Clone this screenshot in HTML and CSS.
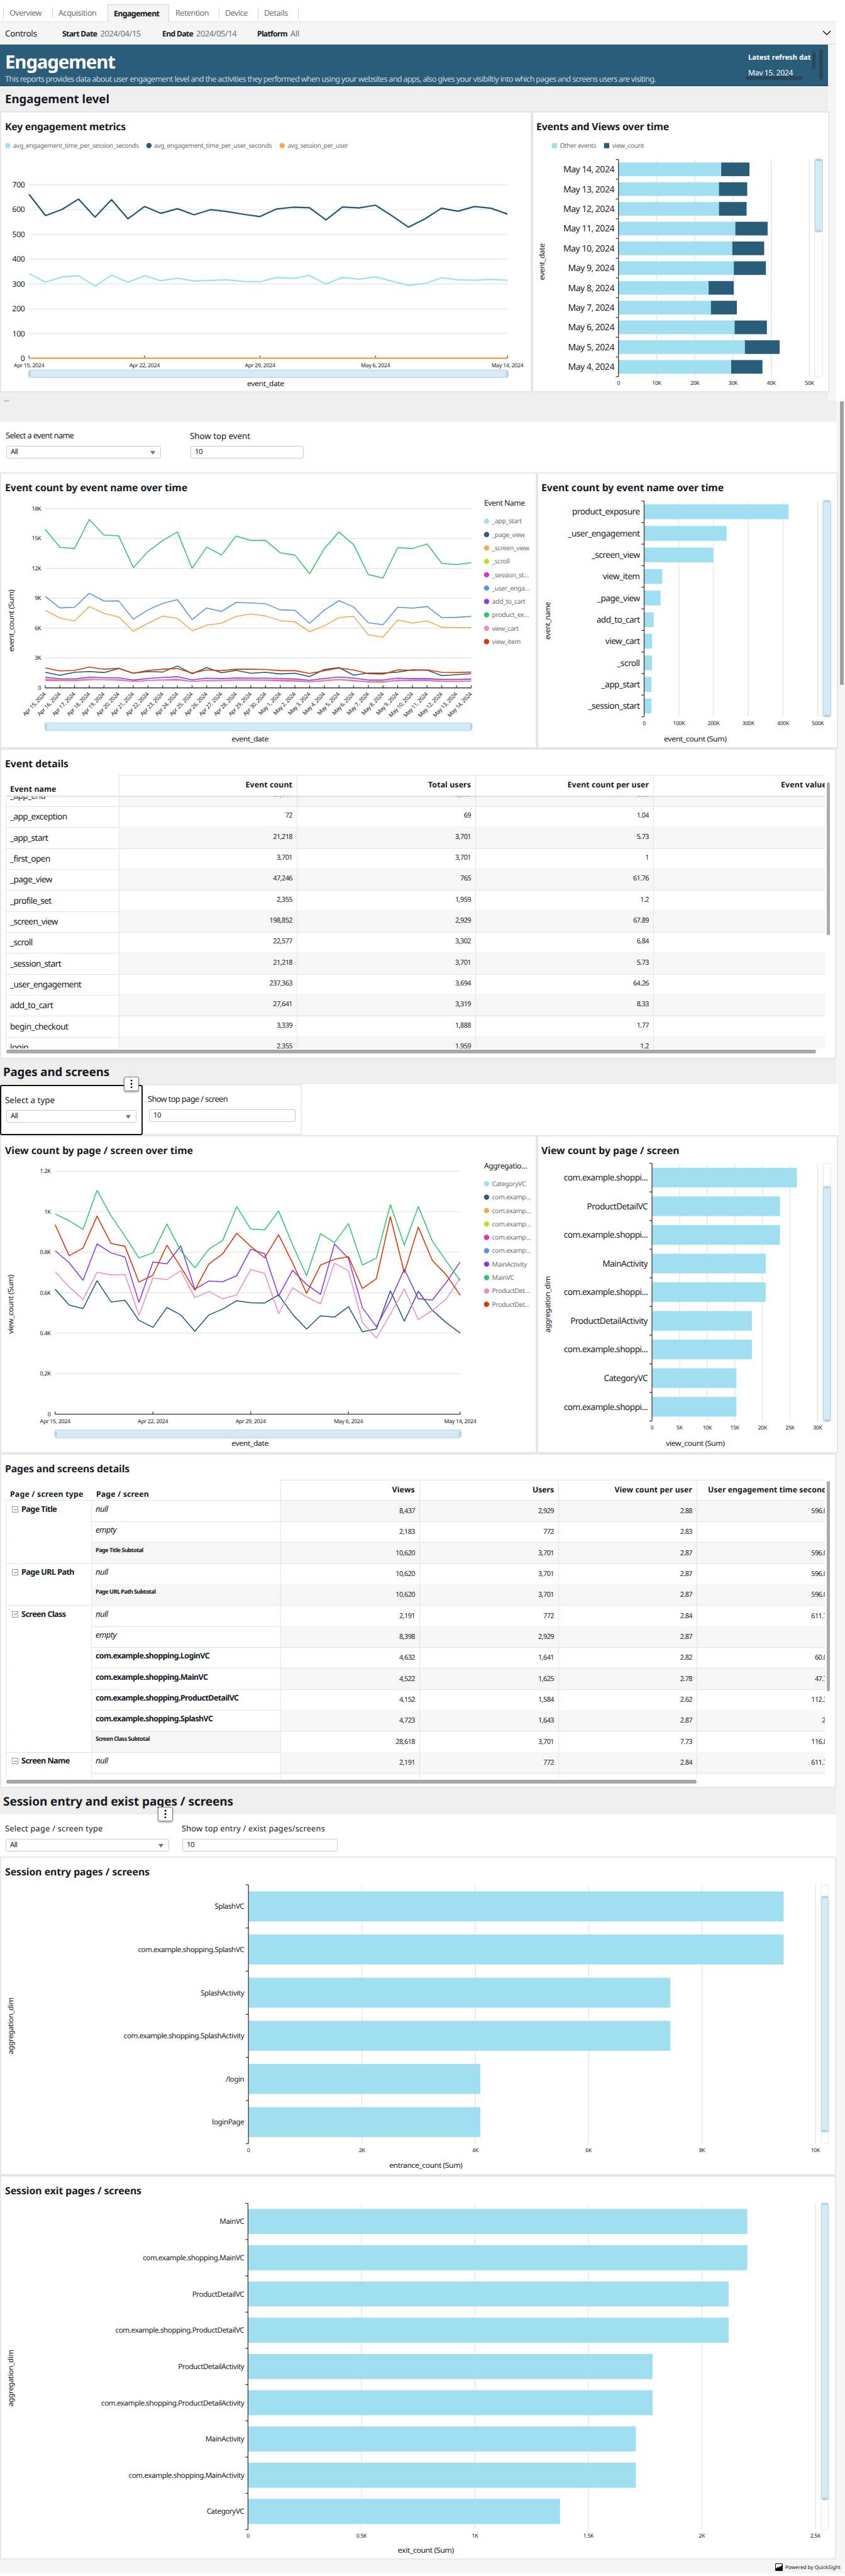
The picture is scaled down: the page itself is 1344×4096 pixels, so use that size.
FILE: index.html
```html
<!DOCTYPE html>
<html lang="en">
<head>
<meta charset="utf-8">
<title>Engagement</title>
<link rel="stylesheet" href="styles.css">
</head>
<body>
<nav class="tabs">
  <a class="tab t1" data-fit="51">Overview</a><a class="tab t2" data-fit="60.4">Acquisition</a><a class="tab t3 active" data-fit="72.4">Engagement</a><a class="tab t4" data-fit="53">Retention</a><a class="tab t5" data-fit="36">Device</a><a class="tab t6" data-fit="38">Details</a>
</nav>
<div class="filters">
  <span class="filters-title" data-fit="50.6">Controls</span>
  <span class="filter f1"><b data-fit="55.5">Start Date</b><span data-fit="64.3">2024/04/15</span></span>
  <span class="filter f2"><b data-fit="49">End Date</b><span data-fit="64.3">2024/05/14</span></span>
  <span class="filter f3"><b data-fit="48">Platform</b><span data-fit="14">All</span></span>
  <svg class="chevron" width="14" height="9" viewBox="0 0 14 9"><path d="M1 1.2 L7 7 L13 1.2" fill="none" stroke="#111" stroke-width="1.3"/></svg>
</div>

<div class="sheet-top">
  <header class="banner">
    <div class="banner-text">
      <h1 data-fit="175">Engagement</h1>
      <p data-fit="1035">This reports provides data about user engagement level and the activities they performed when using your websites and apps, also gives your visibiltiy into which pages and screens users are visiting.</p>
    </div>
    <div class="refresh">
      <div class="refresh-label">Latest refresh date</div>
      <div class="refresh-date" data-fit="71">May 15, 2024</div>
      <i class="bar inner"></i><i class="bar outer"></i><i class="bar under"></i>
    </div>
  </header>
  <h2 class="section s1" data-fit="166">Engagement level</h2>
  <div class="row row1">
    <section class="card"><h3 data-fit="192">Key engagement metrics</h3><svg class="chart" id="metrics"></svg></section>
    <section class="card"><h3 data-fit="211">Events and Views over time</h3><svg class="chart" id="views"></svg></section>
  </div>
  <div class="gap-top">—</div>
</div>

<main class="sheet">
  <i class="page-thumb"></i>
  <div class="gap-rest"></div>
  <div class="params p1">
    <label class="param pa"><span data-fit="108.4">Select a event name</span><span class="field select">All</span></label>
    <label class="param pb"><span class="big" data-fit="96">Show top event</span><span class="field">10</span></label>
  </div>
  <div class="row row2">
    <section class="card"><h3 data-fit="290">Event count by event name over time</h3><svg class="chart" id="events"></svg></section>
    <section class="card"><h3 data-fit="290">Event count by event name over time</h3><svg class="chart" id="eventbars"></svg></section>
  </div>

  <section class="card details d1">
    <h3 data-fit="101">Event details</h3>
    <div class="table events-table">
      <div class="thead"><span data-fit="73.5">Event name</span><span data-fit="74.5">Event count</span><span data-fit="68">Total users</span><span data-fit="129.4">Event count per user</span><span data-fit="73">Event value</span></div>
      <div class="tbody"><div class="rows" id="eventrows"></div></div>
    </div>
    <i class="hscroll"></i><i class="vscroll"></i>
  </section>

  <h2 class="section s2" data-fit="169">Pages and screens</h2>
  <div class="params p2">
    <label class="param pa picked"><span class="big" data-fit="79">Select a type</span><span class="field select">All</span><i class="more"><svg width="4" height="15" viewBox="0 0 4 15"><circle cx="2" cy="2.2" r="1.4"/><circle cx="2" cy="7.500" r="1.4"/><circle cx="2" cy="12.800" r="1.4"/></svg></i></label>
    <label class="param pb"><span data-fit="127">Show top page / screen</span><span class="field">10</span></label>
  </div>
  <div class="row row3">
    <section class="card"><h3 data-fit="299">View count by page / screen over time</h3><svg class="chart" id="pages"></svg></section>
    <section class="card"><h3 data-fit="219.6">View count by page / screen</h3><svg class="chart" id="pagebars"></svg></section>
  </div>

  <section class="card details d2">
    <h3 data-fit="198">Pages and screens details</h3>
    <div class="table pages-table">
      <div class="thead"><span data-fit="116.5">Page / screen type</span><span data-fit="84">Page / screen</span><span data-fit="36.5">Views</span><span data-fit="34">Users</span><span data-fit="123.5">View count per user</span><span data-fit="195">User engagement time seconds</span></div>
      <div class="tbody"><div class="rows" id="pagerows"></div></div>
    </div>
    <i class="hscroll"></i><i class="vscroll"></i>
  </section>

  <h2 class="section s3" data-fit="366">Session entry and exist pages / screens</h2>
  <div class="params p3">
    <label class="param pa"><span data-fit="155.5">Select page / screen type</span><span class="field select">All</span><i class="more"><svg width="4" height="15" viewBox="0 0 4 15"><circle cx="2" cy="2.2" r="1.4"/><circle cx="2" cy="7.500" r="1.4"/><circle cx="2" cy="12.800" r="1.4"/></svg></i></label>
    <label class="param pb"><span data-fit="228">Show top entry / exist pages/screens</span><span class="field">10</span></label>
  </div>
  <section class="card entry"><h3 data-fit="230">Session entry pages / screens</h3><svg class="chart" id="entry"></svg></section>
  <section class="card exit"><h3 data-fit="217">Session exit pages / screens</h3><svg class="chart" id="exit"></svg></section>
  <footer class="footer">
    <svg width="12" height="12" viewBox="0 0 16 16"><rect x=".7" y=".7" width="14.6" height="14.6" rx="1" fill="#fff" stroke="#111" stroke-width="1.4"/><path d="M1 15V11L6 7V9.500L9.500 5.500V8L15 3V15Z" fill="#111"/></svg>
    <span data-fit="88">Powered by QuickSight</span>
  </footer>
</main>
<script src="charts.js"></script>
</body>
</html>
```
FILE: styles.css
```css
* { box-sizing: border-box; }
body { margin: 0; width: 1344px; height: 4096px; background: #fff; color: #16191f; font-family: "Noto Sans", "Open Sans", sans-serif; letter-spacing: -0.035em; text-rendering: geometricPrecision; overflow: hidden; }
h1, h2, h3, p { margin: 0; }

.tabs { display: flex; align-items: flex-end; height: 35px; padding-left: 5px; border-bottom: 1px solid #e3e3e3; width: 1330px; }
.tab { position: relative; height: 28px; line-height: 28px; padding-left: 10px; font-size: 12.6px; color: #687078; margin-bottom: -1px; }
.tab::before { content: ""; position: absolute; left: 0; top: 5px; height: 17px; border-left: 1px solid #d5d5d5; }
.t1 { width: 78px; } .t2 { width: 88px; } .t3 { width: 98px; } .t4 { width: 79px; } .t5 { width: 62px; } .t6 { width: 65px; }
.t6::after { content: ""; position: absolute; right: 0; top: 5px; height: 17px; border-left: 1px solid #d5d5d5; }
.active { background: #f5f5f5; border: 1px solid #d5d5d5; border-bottom: 0; color: #111; font-weight: 700; padding-left: 9px; line-height: 27px; font-size: 12.4px; }
.active::before, .t4::before { display: none; }

.filters { position: relative; display: flex; align-items: center; width: 1330px; height: 36px; background: #f5f5f5; font-size: 12.8px; border-bottom: 1px solid #d9d9d9; }
.filters-title { margin-left: 8px; width: 91px; font-size: 13.4px; }
.filter { color: #687078; white-space: nowrap; }
.filter b { color: #16191f; font-weight: 700; margin-right: 5px; font-size: 12.2px; }
.f1 { width: 159px; } .f2 { width: 151px; }
.chevron { margin-left: auto; margin-right: 8px; }

.sheet-top { width: 1330px; height: 567px; background: #f5f5f5; }
.banner { display: flex; width: 1317px; height: 66px; background: #295d79; color: #fff; border-bottom: 1px solid #12435f; overflow: hidden; }
.banner-text { width: 1190px; padding-left: 8px; }
h1 { font-size: 29.4px; line-height: 36px; margin-top: 9px; font-weight: 700; }
.banner p { font-size: 12.6px; line-height: 16px; margin-top: 2px; color: #d0d5d9; white-space: nowrap; }
.refresh { position: relative; width: 127px; }
.refresh-label { width: 100px; margin-top: 12px; font-size: 11.2px; line-height: 18px; font-weight: 700; letter-spacing: 0; white-space: nowrap; overflow: hidden; }
.refresh-date { margin-top: 6px; height: 13px; line-height: 18px; font-size: 12.2px; overflow: hidden; }
.bar { position: absolute; background: #28475a; border-radius: 3px; }
.inner { left: 102px; top: 11px; width: 5px; height: 28px; }
.outer { left: 113px; top: 7px; width: 6px; height: 49px; }
.under { left: -4px; top: 50px; width: 91px; height: 6px; }

.section { background: #eee; font-weight: 700; font-size: 18.6px; color: #16191f; padding-left: 8px; display: flex; align-items: center; white-space: nowrap; }
.s1 { height: 40px; width: 1317px; }
.s2 { height: 40px; width: 1330px; padding-left: 5px; }
.s3 { height: 42px; width: 1330px; padding-left: 5px; font-size: 19px; }

.row { display: flex; }
.card { position: relative; background: #fff; border: 2px solid #e6e6e6; color: #16191f; }
.card h3 { height: 40px; line-height: 44px; padding-left: 6px; font-size: 15.8px; font-weight: 700; white-space: nowrap; }
.chart { display: block; width: 100%; height: calc(100% - 40px); overflow: visible; }
.row1 { height: 447px; } .row1 .card:first-child { width: 846px; } .row1 .card:last-child { width: 473px; }
.row2 { height: 439px; } .row3 { height: 506px; }
.row2 .card:first-child, .row3 .card:first-child { width: 854px; }
.row2 .card:last-child, .row3 .card:last-child { width: 479px; }
.row .card + .card h3 { padding-left: 5px; }
.gap-top { position: relative; z-index: 1; width: 1317px; height: 14px; background: #eee; color: #777; font-size: 9px; line-height: 26px; padding-left: 6px; }

.sheet { position: relative; background: #f5f5f5; height: 3454px; }
.page-thumb { position: absolute; left: 1336px; top: 0; width: 6px; height: 451px; background: #a0a0a0; }
.gap-rest { height: 33px; width: 1330px; background: #eee; }

.params { display: flex; background: #fff; width: 1330px; font-size: 12.8px; }
.param { position: relative; display: block; line-height: 18px; }
.param > span { display: block; white-space: nowrap; }
.param .big { font-size: 13.4px; }
.param .field { border: 1px solid #c9c9c9; border-radius: 3px; background: #fff; height: 20px; line-height: 18px; padding-left: 6px; font-size: 11.4px; position: relative; }
.select::after { content: ""; position: absolute; right: 8px; top: 7px; border: 4.5px solid transparent; border-top: 6px solid #777; border-bottom: 0; }
.p1 { height: 80px; } .p1 .pa { width: 246px; margin-left: 10px; padding-top: 12px; } .p1 .pb { width: 180px; margin-left: 47px; padding-top: 13px; }
.p1 .field { margin-top: 8px; } .p1 .pb .field { margin-top: 7px; } .p1 .param > span:first-child { margin-left: -1px; }
.p2 { height: 81px; width: 1333px; }
.p2 .pa { width: 227px; height: 80px; border: 2px solid #111; border-radius: 3px; padding: 13px 8px 0; margin-top: 1px; }
.p2 .pa .field { margin-top: 7px; } .p2 .pa > span:first-child { margin-left: -2px; }
.p2 .pb { width: 253px; border: 2px solid #e9e9e9; border-left: 0; padding: 12px 8px 0 10px; }
.p2 .pb .field { margin-top: 8px; } .p2 .pb > span:first-child { margin-left: -2px; }
.p3 { height: 67px; } .p3 .pa { width: 260px; margin-left: 9px; padding-top: 13px; } .p3 .pb { width: 247px; margin-left: 21px; padding-top: 13px; }
.p3 .field { margin-top: 8px; } .p3 .param > span:first-child { margin-left: -1px; }
.more { position: absolute; left: 195px; top: -15px; width: 24px; height: 23px; background: #fff; border: 1px solid #777; border-radius: 3px; box-shadow: 0 2px 3px rgba(0,0,0,.3); display: flex; align-items: center; justify-content: center; }
.p3 .more { left: 242px; top: -12px; }

.details { width: 1330px; }
.d1 { height: 494px; } .d2 { height: 532px; }
.table { margin-left: 7px; width: 1303px; overflow: hidden; }
.table .thead, .table .tr { display: grid; }
.events-table .thead, .events-table .tr { grid-template-columns: 181px 283px 284px 283px 283px; }
.pages-table .thead, .pages-table .tr { grid-template-columns: 137px 301px 221px 221px 220px 220px; }
.thead { position: relative; height: 33px; font-weight: 700; font-size: 12.3px; box-shadow: 0 2px 2px #dedede; background: #fff; z-index: 1; }
.thead span { border-top: 1px solid #e3e3e3; border-right: 1px solid #e3e3e3; text-align: right; padding-right: 7px; line-height: 29px; white-space: nowrap; }
.thead span:first-child, .pages-table .thead span:nth-child(2) { border-top: 0; text-align: left; line-height: 45px; padding: 0 0 0 7px; }
.pages-table .thead span:first-child { border-right: 0; }
.pages-table .thead { box-shadow: none; border-bottom: 1px solid #e3e3e3; }
.tbody { height: 402px; overflow: hidden; }
.rows { margin-top: -18px; }
.tr { height: 33.35px; font-size: 10.9px; }
.tr > span { border-right: 1px solid #e6e6e6; border-bottom: 1px solid #e3e3e3; text-align: right; padding-right: 7px; line-height: 33px; white-space: nowrap; }
.tr > span:first-child { text-align: left; font-size: 13.6px; border-left: 1px solid #e3e3e3; padding-left: 6px; line-height: 35px; }
.events-table .tr:nth-child(odd) > span + span { background: #f6f6f6; }
.d2 .tbody { height: 442px; }
.d2 .rows { margin-top: 0; }
.pages-table .tr > span:nth-child(2) { text-align: left; padding-left: 6px; line-height: 27px; font-size: 12.4px; font-weight: 700; }
.pages-table .tr > span:first-child { font-weight: 700; font-size: 12.6px; line-height: 27px; padding-left: 9px; border-bottom-color: transparent; }
.pages-table .tr.last > span:first-child { border-bottom-color: #e3e3e3; }
.pages-table .tr > span:nth-child(2).it { font-weight: 400; font-style: italic; font-size: 13px; }
.pages-table .tr > span:nth-child(2).sub { font-size: 9.2px; line-height: 24px; background: #f6f6f6; }
.pages-table .tr:nth-child(odd) > span:nth-child(n+3) { background: #f6f6f6; }
.toggle { display: inline-block; position: relative; width: 10px; height: 10px; border: 1px solid #999; margin-right: 5px; vertical-align: -1px; }
.toggle::after { content: ""; position: absolute; left: 1.500px; right: 1.500px; top: 3.500px; height: 1px; background: #777; }
.hscroll, .vscroll { position: absolute; background: #a8a8a8; border-radius: 3px; }
.d1 .hscroll { left: 8px; top: 477px; width: 1288px; height: 6px; }
.d1 .vscroll { left: 1313px; top: 52px; width: 5px; height: 243px; }
.d2 .hscroll { left: 8px; top: 517px; width: 1098px; height: 6px; }
.d2 .vscroll { left: 1313px; top: 42px; width: 5px; height: 334px; }

.entry { width: 1330px; height: 507px; } .exit { width: 1330px; height: 611px; }
.footer { height: 22px; display: flex; align-items: center; justify-content: flex-end; gap: 4px; padding: 2px 7px 0 0; font-size: 8.2px; }

svg text { font-family: "Noto Sans", "Open Sans", sans-serif; fill: #16191f; letter-spacing: -0.035em; text-rendering: geometricPrecision; }
svg text.muted { fill: #687078; }
.grid { stroke: #e6e6e6; stroke-width: 2; }
.axis { stroke: #333; stroke-width: 1.8; }
.track { fill: #fff; stroke: #e6e6e6; stroke-width: 1.5; }
.range { fill: #d3ebf7; stroke: #b9cfe4; stroke-width: 1.5; }
.handle { fill: #d3e3f0; stroke: #a9bdd6; stroke-width: 1.5; }
```
FILE: charts.js
```js
const SCALE = 0.7;
const NS = 'http://www.w3.org/2000/svg';
const C = { sky: '#9fdff1', navy: '#295d79', orange: '#f5a951', lime: '#b5e32b', magenta: '#e52db8', blue: '#5b94e3', violet: '#8236ff', green: '#2cc76b', pink: '#ee8cc5', red: '#dd3400' };

/* track each label so that it fills its intended width */
function fitLabels() {
  document.querySelectorAll('[data-fit]').forEach(el => {
    const range = document.createRange();
    range.selectNodeContents(el);
    const width = range.getBoundingClientRect().width;
    const current = parseFloat(getComputedStyle(el).letterSpacing) || 0;
    el.style.letterSpacing = (current + (el.dataset.fit - width) / el.textContent.length).toFixed(3) + 'px';
  });
}
fitLabels();

function open(id) {
  const svg = document.getElementById(id), r = svg.getBoundingClientRect();
  svg.setAttribute('viewBox', [r.left, r.top, r.width, r.height].map(v => v / SCALE).join(' '));
  svg.setAttribute('preserveAspectRatio', 'none');
  return svg;
}
function add(svg, tag, attrs, text) {
  const el = document.createElementNS(NS, tag);
  for (const k in attrs) el.setAttribute(k, attrs[k]);
  if (text !== undefined) el.textContent = text;
  svg.appendChild(el);
}
const line = (s, x1, y1, x2, y2, cls) => add(s, 'line', { x1, y1, x2, y2, class: cls });
function label(s, text, x, y, size, anchor = 'start', opt = {}) {
  const a = { x, y: y + size * 0.35, 'font-size': size, 'text-anchor': anchor };
  if (opt.muted) a.class = 'muted';
  if (opt.width) { a.textLength = opt.width; a.lengthAdjust = 'spacingAndGlyphs'; }
  if (opt.rotate) a.transform = `rotate(${opt.rotate} ${x} ${y})`;
  add(s, 'text', a, text);
}
function hSlider(s, x1, x2, y, h) {
  add(s, 'rect', { x: x1, y, width: x2 - x1, height: h, class: 'range' });
  for (const x of [x1, x2]) add(s, 'rect', { x: x - 1.8, y: y + h * 0.18, width: 3.6, height: h * 0.64, rx: 2, class: 'handle' });
}
function vSlider(s, x, w, top, bottom, from, to) {
  add(s, 'rect', { x, y: top, width: w, height: bottom - top, rx: 4, class: 'track' });
  add(s, 'rect', { x, y: from, width: w, height: to - from, class: 'range' });
  for (const y of [from, to]) add(s, 'rect', { x: x + w * 0.18, y: y - 1.8, width: w * 0.64, height: 3.6, rx: 2, class: 'handle' });
}

function barChart(id, c) {
  const s = open(id), X = v => c.x0 + (c.x1 - c.x0) * v / c.max;
  const band = (c.bottom - c.top) / c.rows.length;
  c.ticks.forEach((t, i) => {
    const x = X(c.max * i / (c.ticks.length - 1));
    if (i) line(s, x, c.top, x, c.bottom, 'grid');
    label(s, t, x, c.tickY, 12.3, 'middle');
  });
  c.rows.forEach(([name, ...ends], i) => {
    const y = c.top + band * i + (band - c.bar) / 2;
    let from = 0;
    ends.forEach((e, k) => {
      add(s, 'rect', { x: X(from), y, width: X(e) - X(from), height: c.bar, fill: k ? C.navy : C.sky });
      from = e;
    });
    label(s, name, c.labelX, y + c.bar / 2, c.font, 'end');
  });
  for (let i = 0; i <= c.rows.length; i++) line(s, c.x0 - 6, c.top + band * i, c.x0, c.top + band * i, 'axis');
  line(s, c.x0, c.top, c.x0, c.bottom, 'axis');
  label(s, c.yTitle[0], c.yTitle[1], c.yTitle[2], 16.5, 'middle', { rotate: -90, width: c.yTitle[3] });
  if (c.xTitle) label(s, c.xTitle[0], c.xTitle[1], c.xTitle[2], 16.5, 'middle', { width: c.xTitle[3] });
  vSlider(s, c.slider[0], c.slider[1], c.top, c.bottom, c.slider[2], c.slider[3]);
  return s;
}

/* samples are stored in plot steps; steps = [step at zero, step at the top gridline] */
function lineChart(id, c) {
  const s = open(id), n = 30;
  const X = i => c.x0 + (c.x1 - c.x0) * i / (n - 1);
  const Y = v => c.bottom + (c.top - c.bottom) * (c.steps[0] - v) / (c.steps[0] - c.steps[1]);
  const k = c.yTicks.length - 1;
  c.yTicks.forEach((t, i) => {
    const y = c.bottom + (c.top - c.bottom) * i / k;
    if (i) line(s, c.x0, y, c.x1, y, 'grid');
    label(s, t, c.labelX, y, c.font, 'end');
  });
  line(s, c.x0, c.bottom, c.x1, c.bottom, 'axis');
  c.dates.forEach(([i, t]) => {
    line(s, X(i), c.bottom - 6, X(i), c.bottom, 'axis');
    if (c.slanted) label(s, t, X(i) - 1, c.bottom + 12, 12.6, 'end', { rotate: -46 });
    else label(s, t, X(i), c.dateY, 12.6, 'middle');
  });
  c.series.forEach(([color, data]) => add(s, 'polyline', {
    points: data.map((v, i) => X(i).toFixed(1) + ',' + Y(v).toFixed(1)).join(' '),
    fill: 'none', stroke: color, 'stroke-width': c.stroke, 'stroke-linejoin': 'round'
  }));
  hSlider(s, c.x0 + 1, c.x1, c.sliderY, c.sliderH);
  label(s, 'event_date', c.xTitle[0], c.xTitle[1], 16.5, 'middle', { width: 84 });
  if (c.yTitle) label(s, c.yTitle[0], c.yTitle[1], c.yTitle[2], 16.5, 'middle', { rotate: -90, width: c.yTitle[3] });
  return s;
}
function sideLegend(s, title, y, first, step, items) {
  label(s, title, 1100, y, 17.3);
  items.forEach(([color, t], i) => {
    add(s, 'circle', { cx: 1105.6, cy: first + step * i, r: 6, fill: color });
    label(s, t, 1118, first + step * i, 14.9, 'start', { muted: true });
  });
}

const weeks = [[0, 'Apr 15, 2024'], [7, 'Apr 22, 2024'], [14, 'Apr 29, 2024'], [21, 'May 6, 2024'], [29, 'May 14, 2024']];
const days = Array.from({ length: 30 }, (_, i) => [i, i < 16 ? `Apr ${15 + i}, 2024` : `May ${i - 15}, 2024`]);

let s = lineChart('metrics', {
  x0: 66, x1: 1153, top: 419.6, bottom: 813.9, steps: [1418, 731], labelX: 56, font: 17.4, stroke: 3.2,
  yTicks: ['0', '100', '200', '300', '400', '500', '600', '700'], dates: weeks, dateY: 829.4,
  sliderY: 840.5, sliderH: 17, xTitle: [603.5, 870.7],
  series: [
    [C.sky, [1083,1117,1096,1091,1132,1089,1117,1091,1111,1101,1112,1110,1107,1114,1115,1098,1102,1090,1124,1098,1105,1096,1113,1129,1122,1100,1107,1109,1105,1109]],
    ['#1f5876', [769,853,829,788,859,790,866,817,844,826,850,830,837,848,857,827,820,822,870,819,823,812,854,899,866,824,836,817,824,847]],
    [C.orange, Array(30).fill(1417)]
  ]
});
[[C.sky, 17.9, 29.6, 285.5, 'avg_engagement_time_per_session_seconds'], [C.navy, 338.5, 350, 267.5, 'avg_engagement_time_per_user_seconds'], [C.orange, 641, 653.5, 137.5, 'avg_session_per_user']].forEach(([col, cx, x, w, t]) => {
  add(s, 'circle', { cx, cy: 330.6, r: 6, fill: col });
  label(s, t, x, 330.6, 14.6, 'start', { muted: true, width: w });
});

s = barChart('views', {
  x0: 1405.3, x1: 1839.2, max: 50, top: 362.2, bottom: 855.8, bar: 31, labelX: 1395.6, font: 20, tickY: 870,
  ticks: ['0', '10K', '20K', '30K', '40K', '50K'], yTitle: ['event_date', 1231, 595, 83], slider: [1851.6, 17, 363, 525],
  rows: [['May 14, 2024', 26.9, 34.3], ['May 13, 2024', 26.3, 33.7], ['May 12, 2024', 26.3, 33.55], ['May 11, 2024', 30.6, 39.05], ['May 10, 2024', 29.8, 38.15], ['May 9, 2024', 30.2, 38.6], ['May 8, 2024', 23.6, 30.2], ['May 7, 2024', 24.2, 31], ['May 6, 2024', 30.4, 38.85], ['May 5, 2024', 33.1, 42.2], ['May 4, 2024', 29.5, 37.7]]
});
[[C.sky, 1254, 1272, 82.5, 'Other events'], [C.navy, 1372.4, 1390.6, 72.5, 'view_count']].forEach(([col, bx, x, w, t]) => {
  add(s, 'rect', { x: bx, y: 324.8, width: 12, height: 12, fill: col });
  label(s, t, x, 330.6, 14.6, 'start', { muted: true, width: w });
});

s = lineChart('events', {
  x0: 102.7, x1: 1070.6, top: 1155.4, bottom: 1562.5, steps: [1274, 514], labelX: 93.4, font: 12.9, stroke: 2.2,
  yTicks: ['0', '3K', '6K', '9K', '12K', '15K', '18K'], dates: days, slanted: true,
  sliderY: 1642, sliderH: 17.5, xTitle: [568, 1679], yTitle: ['event_count (Sum)', 25, 1410, 141],
  series: [
    [C.lime, [1234,1240,1240,1234,1238,1238,1246,1242,1239,1236,1246,1241,1242,1239,1239,1240,1240,1240,1248,1241,1237,1241,1250,1251,1240,1240,1239,1243,1244,1244]],
    [C.magenta, [1241,1243,1244,1239,1239,1241,1247,1243,1241,1240,1247,1243,1244,1241,1241,1242,1244,1245,1248,1244,1240,1244,1248,1248,1243,1243,1243,1247,1247,1246]],
    [C.pink, [1236,1242,1242,1237,1239,1239,1245,1243,1240,1237,1246,1242,1243,1239,1239,1240,1241,1242,1247,1243,1239,1242,1247,1247,1241,1241,1241,1245,1245,1245]],
    [C.violet, [1228,1236,1236,1228,1231,1231,1241,1234,1230,1227,1240,1233,1235,1232,1233,1233,1234,1236,1242,1234,1228,1233,1241,1241,1233,1235,1235,1238,1238,1237]],
    ['#1f5876', [1208,1221,1208,1205,1209,1192,1212,1205,1207,1181,1214,1188,1210,1200,1212,1208,1215,1212,1226,1196,1188,1220,1211,1211,1207,1197,1199,1222,1218,1214]],
    [C.red, [1189,1202,1200,1186,1195,1191,1212,1200,1195,1192,1211,1198,1201,1195,1195,1196,1201,1201,1213,1201,1190,1198,1214,1216,1197,1200,1198,1208,1209,1207]],
    [C.orange, [945,978,990,929,958,973,1034,1000,970,979,1032,1008,1000,971,961,969,989,994,1036,1011,976,971,1049,1059,986,999,990,1017,1018,1019]],
    [C.blue, [886,935,932,873,906,905,983,943,916,900,984,935,950,912,914,917,943,945,1000,945,904,931,998,1006,932,936,929,976,975,971]],
    [C.green, [601,678,683,560,626,629,764,696,649,613,767,677,711,630,649,649,701,711,790,684,613,667,794,808,679,683,664,746,751,743]]
  ]
});
sideLegend(s, 'Event Name', 1142, 1184, 30.38, [[C.sky, '_app_start'], [C.navy, '_page_view'], [C.orange, '_screen_view'], [C.lime, '_scroll'], [C.magenta, '_session_st…'], [C.blue, '_user_enga…'], [C.violet, 'add_to_cart'], [C.green, 'product_ex…'], [C.pink, 'view_cart'], [C.red, 'view_item']]);

barChart('eventbars', {
  x0: 1463.6, x1: 1858.2, max: 500, top: 1138, bottom: 1628, bar: 33.7, labelX: 1453.7, font: 19.4, tickY: 1642.6,
  ticks: ['0', '100K', '200K', '300K', '400K', '500K'], yTitle: ['event_name', 1244.6, 1410.5, 85], xTitle: ['event_count (Sum)', 1579.7, 1678.4, 142], slider: [1870, 17.5, 1138.5, 1626.5],
  rows: [['product_exposure', 416], ['_user_engagement', 237.4], ['_screen_view', 198.9], ['view_item', 52], ['_page_view', 47.2], ['add_to_cart', 27.6], ['view_cart', 23], ['_scroll', 22.6], ['_app_start', 21.2], ['_session_start', 21.2]]
});

s = lineChart('pages', {
  x0: 125.3, x1: 1045.7, top: 2660.3, bottom: 3212.4, steps: [1346, 207], labelX: 115, font: 12.9, stroke: 2.2,
  yTicks: ['0', '0.2K', '0.4K', '0.6K', '0.8K', '1K', '1.2K'], dates: weeks, dateY: 3228,
  sliderY: 3248.5, sliderH: 17.5, xTitle: [568, 3279], yTitle: ['view_count (Sum)', 23.6, 2963, 134],
  series: [
    ['#1f5876', [760,834,851,720,820,812,906,939,846,881,957,881,853,814,824,825,787,878,947,885,891,842,960,946,768,910,770,859,917,966]],
    [C.pink, [678,749,808,681,693,691,883,707,715,674,800,771,805,787,668,686,874,753,796,829,638,674,916,989,877,759,903,860,806,708]],
    [C.violet, [580,636,718,548,590,609,822,633,641,557,760,722,725,697,573,594,792,672,738,784,548,616,847,936,812,666,805,811,728,632]],
    [C.green, [408,439,480,297,416,512,614,590,455,580,660,573,531,373,478,482,394,552,697,500,542,453,647,614,364,553,373,534,628,720]],
    [C.red, [458,603,567,418,546,559,727,695,554,657,765,642,594,498,559,613,505,637,780,647,620,608,757,711,420,683,469,625,693,789]]
  ]
});
sideLegend(s, 'Aggregatio…', 2647.7, 2689, 30.43, [[C.sky, 'CategoryVC'], [C.navy, 'com.examp…'], [C.orange, 'com.examp…'], [C.lime, 'com.examp…'], [C.magenta, 'com.examp…'], [C.blue, 'com.examp…'], [C.violet, 'MainActivity'], [C.green, 'MainVC'], [C.pink, 'ProductDet…'], [C.red, 'ProductDet…']]);

barChart('pagebars', {
  x0: 1481.5, x1: 1857.6, max: 30, top: 2642.4, bottom: 3228, bar: 44.6, labelX: 1471.5, font: 19.4, tickY: 3243,
  ticks: ['0', '5K', '10K', '15K', '20K', '25K', '30K'], yTitle: ['aggregation_dim', 1244.5, 2963, 128], xTitle: ['view_count (Sum)', 1579.8, 3278, 133], slider: [1870.4, 17, 2696.7, 3227],
  rows: [['com.example.shoppi...', 26.27], ['ProductDetailVC', 23.2], ['com.example.shoppi...', 23.2], ['MainActivity', 20.6], ['com.example.shoppi...', 20.6], ['ProductDetailActivity', 18.1], ['com.example.shoppi...', 18.1], ['CategoryVC', 15.3], ['com.example.shoppi...', 15.3]]
});

barChart('entry', {
  x0: 564.5, x1: 1852.7, max: 10, top: 4281.4, bottom: 4869.4, bar: 68, labelX: 554.7, font: 16.6, tickY: 4884,
  ticks: ['0', '2K', '4K', '6K', '8K', '10K'], yTitle: ['aggregation_dim', 24.5, 4602, 128], xTitle: ['entrance_count (Sum)', 967.5, 4918, 166], slider: [1866, 16.5, 4309, 4841],
  rows: [['SplashVC', 9.44], ['com.example.shopping.SplashVC', 9.44], ['SplashActivity', 7.44], ['com.example.shopping.SplashActivity', 7.44], ['/login', 4.09], ['loginPage', 4.09]]
});
barChart('exit', {
  x0: 563.5, x1: 1852.7, max: 2.5, top: 5005, bottom: 5746, bar: 57, labelX: 554.7, font: 16.6, tickY: 5760,
  ticks: ['0', '0.5K', '1K', '1.5K', '2K', '2.5K'], yTitle: ['aggregation_dim', 24.5, 5402, 128], xTitle: ['exit_count (Sum)', 967.5, 5793.5, 127], slider: [1866, 16.5, 5006, 5676.6],
  rows: [['MainVC', 2.2], ['com.example.shopping.MainVC', 2.2], ['ProductDetailVC', 2.118], ['com.example.shopping.ProductDetailVC', 2.118], ['ProductDetailActivity', 1.783], ['com.example.shopping.ProductDetailActivity', 1.783], ['MainActivity', 1.709], ['com.example.shopping.MainActivity', 1.709], ['CategoryVC', 1.375]]
});

const cells = r => r.map(v => `<span>${v}</span>`).join('');
document.getElementById('eventrows').innerHTML = [
  ['_app_end', '21,011', '3,699', '5.68', ''], ['_app_exception', '72', '69', '1.04', ''], ['_app_start', '21,218', '3,701', '5.73', ''],
  ['_first_open', '3,701', '3,701', '1', ''], ['_page_view', '47,246', '765', '61.76', ''], ['_profile_set', '2,355', '1,959', '1.2', ''],
  ['_screen_view', '198,852', '2,929', '67.89', ''], ['_scroll', '22,577', '3,302', '6.84', ''], ['_session_start', '21,218', '3,701', '5.73', ''],
  ['_user_engagement', '237,363', '3,694', '64.26', ''], ['add_to_cart', '27,641', '3,319', '8.33', ''], ['begin_checkout', '3,339', '1,888', '1.77', ''], ['login', '2,355', '1,959', '1.2', '']
].map(r => `<div class="tr">${cells(r)}</div>`).join('');

document.getElementById('pagerows').innerHTML = [
  ['Page Title', 'null', '8,437', '2,929', '2.88', '596.06'], ['', 'empty', '2,183', '772', '2.83', ''], ['', 'Page Title Subtotal', '10,620', '3,701', '2.87', '596.06'],
  ['Page URL Path', 'null', '10,620', '3,701', '2.87', '596.06'], ['', 'Page URL Path Subtotal', '10,620', '3,701', '2.87', '596.06'],
  ['Screen Class', 'null', '2,191', '772', '2.84', '611.74'], ['', 'empty', '8,398', '2,929', '2.87', ''], ['', 'com.example.shopping.LoginVC', '4,632', '1,641', '2.82', '60.08'],
  ['', 'com.example.shopping.MainVC', '4,522', '1,625', '2.78', '47.73'], ['', 'com.example.shopping.ProductDetailVC', '4,152', '1,584', '2.62', '112.34'],
  ['', 'com.example.shopping.SplashVC', '4,723', '1,643', '2.87', '2.5'], ['', 'Screen Class Subtotal', '28,618', '3,701', '7.73', '116.81'],
  ['Screen Name', 'null', '2,191', '772', '2.84', '611.74'], ['', '', '', '', '', '']
].map(([type, name, ...nums]) => {
  const sub = name.endsWith('Subtotal');
  const cls = sub ? 'sub' : (name === 'null' || name === 'empty' ? 'it' : '');
  return `<div class="tr${sub ? ' last' : ''}"><span>${type ? '<i class="toggle"></i>' + type : ''}</span><span class="${cls}">${name}</span>${cells(nums)}</div>`;
}).join('');
```
